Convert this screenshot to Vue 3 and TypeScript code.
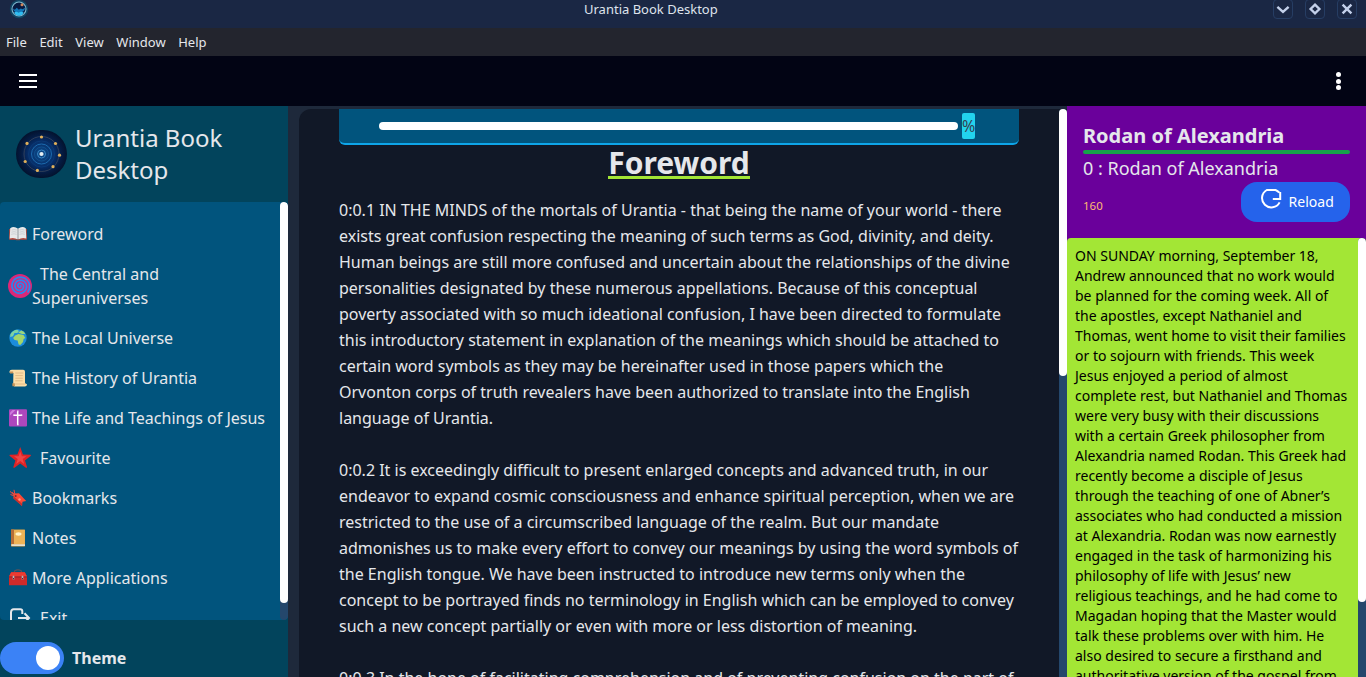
<script setup lang="ts">
interface NavItem {
  icon: string
  label: string
  large?: boolean
}

const menus: string[] = ['File', 'Edit', 'View', 'Window', 'Help']

const navItems: NavItem[] = [
  { icon: 'book', label: 'Foreword' },
  { icon: 'spiral', label: 'The Central and\nSuperuniverses', large: true },
  { icon: 'globe', label: 'The Local Universe' },
  { icon: 'scroll', label: 'The History of Urantia' },
  { icon: 'cross', label: 'The Life and Teachings of Jesus' },
  { icon: 'star', label: 'Favourite', large: true },
  { icon: 'bookmark', label: 'Bookmarks' },
  { icon: 'notebook', label: 'Notes' },
  { icon: 'toolbox', label: 'More Applications' },
  { icon: 'exit', label: 'Exit', large: true },
]

// Archimedean arm, wound from the centre of a 24 unit box.
function spiralArm(start: number, turns: number, radius: number): string {
  const steps = 60
  const points: string[] = []
  for (let i = 0; i <= steps; i++) {
    const t = i / steps
    const angle = start + t * turns * Math.PI * 2
    const r = 0.6 + t * radius
    points.push(`${(12 + r * Math.cos(angle)).toFixed(2)} ${(12 + r * Math.sin(angle)).toFixed(2)}`)
  }
  return 'M' + points.join('L')
}

const spiral = spiralArm(0, 3.1, 9.3)

const paragraphs: string[] = [
  `0:0.1 IN THE MINDS of the mortals of Urantia - that being the name of your world - there
exists great confusion respecting the meaning of such terms as God, divinity, and deity.
Human beings are still more confused and uncertain about the relationships of the divine
personalities designated by these numerous appellations. Because of this conceptual
poverty associated with so much ideational confusion, I have been directed to formulate
this introductory statement in explanation of the meanings which should be attached to
certain word symbols as they may be hereinafter used in those papers which the
Orvonton corps of truth revealers have been authorized to translate into the English
language of Urantia.`,
  `0:0.2 It is exceedingly difficult to present enlarged concepts and advanced truth, in our
endeavor to expand cosmic consciousness and enhance spiritual perception, when we are
restricted to the use of a circumscribed language of the realm. But our mandate
admonishes us to make every effort to convey our meanings by using the word symbols of
the English tongue. We have been instructed to introduce new terms only when the
concept to be portrayed finds no terminology in English which can be employed to convey
such a new concept partially or even with more or less distortion of meaning.`,
  `0:0.3 In the hope of facilitating comprehension and of preventing confusion on the part of`,
]

const rodanText = `ON SUNDAY morning, September 18,
Andrew announced that no work would
be planned for the coming week. All of
the apostles, except Nathaniel and
Thomas, went home to visit their families
or to sojourn with friends. This week
Jesus enjoyed a period of almost
complete rest, but Nathaniel and Thomas
were very busy with their discussions
with a certain Greek philosopher from
Alexandria named Rodan. This Greek had
recently become a disciple of Jesus
through the teaching of one of Abner’s
associates who had conducted a mission
at Alexandria. Rodan was now earnestly
engaged in the task of harmonizing his
philosophy of life with Jesus’ new
religious teachings, and he had come to
Magadan hoping that the Master would
talk these problems over with him. He
also desired to secure a firsthand and
authoritative version of the gospel from`
</script>

<template>
  <div class="window">
    <header class="titlebar">
      <svg class="app-icon" viewBox="0 0 22 22">
        <circle cx="11" cy="11" r="9.2" fill="#0c5a78" opacity=".6" />
        <circle cx="11" cy="11" r="7" fill="#081a40" stroke="#7fb6cc" stroke-width="1.1" />
        <path d="M4.8 10.5l2 1.2 2-2 2 2 2-1.2 2 .7 2.4-1.7a6.4 6.4 0 0 1-12.4 1z" fill="#1478b8" />
        <path d="M6.2 14.6q2.2-1.6 4.4.2 2.6-1.8 5-.2-1.4 3.2-4.6 3.2t-4.8-3.2z" fill="#2fbdf0" />
        <circle cx="14" cy="6.8" r="1.5" fill="#d08558" />
      </svg>
      <span class="title">Urantia Book Desktop</span>
      <div class="controls">
        <span class="control"><svg viewBox="0 0 18 18"><path d="M3.4 6.8L9 11.8l5.6-5" /></svg></span>
        <span class="control"><svg viewBox="0 0 18 18"><path d="M9 4.6L13.4 9 9 13.4 4.6 9z" /></svg></span>
        <span class="control"><svg viewBox="0 0 18 18"><path d="M4.6 4.6l8.8 8.8M13.4 4.6l-8.8 8.8" /></svg></span>
      </div>
    </header>
    <nav class="menubar">
      <span v-for="m in menus" :key="m">{{ m }}</span>
    </nav>
    <div class="toolbar">
      <div class="burger"><i></i><i></i><i></i></div>
      <div class="kebab"><i></i><i></i><i></i></div>
    </div>

    <main class="body">
      <aside class="sidebar">
        <div class="brand">
          <svg class="logo" viewBox="0 0 51 48">
            <defs>
              <radialGradient id="cosmos">
                <stop offset="0" stop-color="#0c4c8c" />
                <stop offset=".55" stop-color="#062c66" />
                <stop offset=".8" stop-color="#041b42" />
                <stop offset="1" stop-color="#03132f" />
              </radialGradient>
            </defs>
            <rect width="51" height="48" rx="24" fill="url(#cosmos)" />
            <g fill="none">
              <circle cx="25.5" cy="24" r="17.5" stroke="#4b5360" stroke-width=".6" />
              <circle cx="25.5" cy="24" r="13" stroke="#0d3d7a" stroke-width=".7" />
              <circle cx="25.5" cy="24" r="10" stroke="#1c69ad" stroke-width="1" />
              <circle cx="25.5" cy="24" r="7" stroke="#145796" stroke-width=".7" />
              <circle cx="25.5" cy="24" r="4" stroke="#3886c4" stroke-width="1" />
            </g>
            <circle cx="25.5" cy="24" r="2.1" fill="#e6eff2" />
            <g fill="#e0b05a">
              <circle cx="25.5" cy="7" r="1.6" /><circle cx="39.5" cy="13.5" r="1.6" />
              <circle cx="43.5" cy="25.2" r="1.6" /><circle cx="37" cy="36.7" r="1.6" />
              <circle cx="21.4" cy="40.4" r="1.6" /><circle cx="9.2" cy="31.5" r="1.6" />
              <circle cx="11" cy="13.4" r="1.6" />
            </g>
          </svg>
          <h1>Urantia Book<br />Desktop</h1>
        </div>

        <div class="nav-wrap">
          <ul class="nav">
            <li v-for="item in navItems" :key="item.label" :class="{ large: item.large }">
              <svg v-if="item.icon === 'book'" class="emoji" viewBox="0 0 18 18">
                <path d="M.2 4h17.6v10.8H.2z" fill="#b8493c" />
                <path d="M1.2 3.2Q5 .6 9 3.7 13 .6 16.8 3.2l.5 10.2Q13 12 9 14.5 5 12 .7 13.4z" fill="#e7e9ea" />
                <path d="M9 3.7v10.8" stroke="#8f989d" stroke-width="1" />
                <path d="M2.7 5.1q2.5-1 5 0M2.4 7.2q2.6-1 5.2 0M2.2 9.3q2.8-1 5.4 0M10.4 5.1q2.5-1 5 0M10.4 7.2q2.6-1 5.2 0M10.4 9.3q2.8-1 5.4 0" fill="none" stroke="#c6cccf" stroke-width=".8" />
                <path d="M7 14.3h4v1H7z" fill="#8b5650" />
              </svg>
              <svg v-else-if="item.icon === 'spiral'" class="emoji" viewBox="0 0 24 24">
                <circle cx="12" cy="12" r="12" fill="#db2777" />
                <path :d="spiral" fill="none" stroke="#2b86ee" stroke-width="1.75" stroke-linecap="round" />
              </svg>
              <svg v-else-if="item.icon === 'globe'" class="emoji" viewBox="0 0 18 18">
                <circle cx="9" cy="9" r="8.7" fill="#1c8cdb" />
                <path d="M1.5 5Q4 .9 8.2.7L10 2 8.3 4 5.5 4 4 7.2 1.1 8z" fill="#7ed3a0" />
                <path d="M6.2 6.4L9.5 5l5 1 1.8 3.1-1.7 1-.6 2.8-2.7 3-1.7-.5-1-4-3-.5-1.5-2z" fill="#a3d66a" />
                <path d="M9.2 3.4l3.2-2q2.7.9 4 3.6L13 5z" fill="#9bd67c" />
              </svg>
              <svg v-else-if="item.icon === 'scroll'" class="emoji" viewBox="0 0 18 18">
                <path d="M2.8.8h11.4q1.8 0 1.8 2v11.4l2 1q0 2.3-2.2 2.3H5.4q-1.5-1-1.2-3L4.4 4H.8Q-.4.8 2.8.8z" fill="#fddda6" />
                <path d="M1 2.6h3.2v1.9H1zM3.3 14.2h2.5l.2 3H3.4z" fill="#c69358" />
                <path d="M6.3 4h8M6.3 6.6h7.5M6.3 9.2h7.5M6.2 11.8h7.5M6 15h10.5" stroke="#dfb783" stroke-width=".9" />
              </svg>
              <svg v-else-if="item.icon === 'cross'" class="emoji" viewBox="0 0 18 18">
                <rect width="18" height="17.4" y=".2" rx="1" fill="#ac47bd" />
                <path d="M1 3.5L3.5 1h3L1 6.5z" fill="#cf7bdd" />
                <path d="M8.7 2.2v13.5M4.8 6.2h8" stroke="#fff" stroke-width="1.5" />
                <path d="M8 2h1.6M8 15.8h1.6M4.8 5.4v1.6M12.8 5.4v1.6" stroke="#fff" stroke-width=".8" />
              </svg>
              <svg v-else-if="item.icon === 'star'" class="emoji" viewBox="0 0 24 24">
                <path d="M12.2 1L15 8.6l7.6.1q.8.6 0 1.3L17 14.4l2.1 6.8q-.2.9-1.2.5l-5.7-4.2-5.7 4.2q-1 .4-1.2-.5l2.1-6.8L1.8 10q-.8-.7 0-1.3l7.6-.1z" fill="#df2426" />
                <path d="M12.2 5.4l1.7 4.8h4.5l-3.7 2.9 1.5 5-4-3-4 3 1.5-5L6 10.2h4.6z" fill="#f04545" />
              </svg>
              <svg v-else-if="item.icon === 'bookmark'" class="emoji" viewBox="0 0 18 18">
                <path d="M5 4.5l5-.2L17.2 12l-3.7.8-.5 4.1L4.3 9.3z" fill="#fb4935" />
                <path d="M4.3 9.3L13 16.9l.1-2.1L5.3 8z" fill="#c92e2b" />
                <path d="M6.2 6.5L3.2 3M5.8 6.8L1 2.4M5.5 7L1.5 5.5M6 6L5 .8" stroke="#f04b3d" stroke-width="1" />
                <circle cx="6.7" cy="7" r="1" fill="#7e302b" />
                <circle cx="10.5" cy="10.5" r="1.2" fill="#ff9a84" />
              </svg>
              <svg v-else-if="item.icon === 'notebook'" class="emoji" viewBox="0 0 18 18">
                <rect x="2" y=".4" width="14" height="17" rx=".6" fill="#dfa347" />
                <path d="M2 .5h3v14.4H2z" fill="#b66e38" />
                <path d="M2.5 15.3H16v1.6H2.5z" fill="#e6dfcf" />
                <path d="M5 1h10.8v14H5z" fill="#edb357" />
                <ellipse cx="9.5" cy="5" rx="3" ry="1.7" fill="#fff3ca" />
              </svg>
              <svg v-else-if="item.icon === 'toolbox'" class="emoji" viewBox="0 0 18 18">
                <path d="M5.5 3.6V2Q9-.1 12.5 2v1.6" fill="none" stroke="#5e5158" stroke-width="1.2" />
                <path d="M2.2 3.2h13.6L18 7.4v8.8H0V7.4z" fill="#cf2a2a" />
                <path d="M2.2 3.2h13.6L18 7.4H0z" fill="#ec3b31" />
                <path d="M0 8h18" stroke="#93252a" stroke-width="1" />
                <path d="M4.5 6.8v3.8M13.5 6.8v3.8" stroke="#aeb9c0" stroke-width="1.6" />
                <path d="M4.5 9v1.3M13.5 9v1.3" stroke="#4b2e36" stroke-width="1" />
              </svg>
              <svg v-else class="emoji" viewBox="0 0 24 24">
                <path d="M3 10V6.5Q3 3.2 5.7 3.2h6.6q2 0 2 2V8M3 10v8q0 2.7 2.7 2.7h8.6V17M10 12h11M16.5 7.2L21 12l-4.5 4.6" fill="none" stroke="#e5e7eb" stroke-width="2" />
              </svg>
              <span class="label">{{ item.label }}</span>
            </li>
          </ul>
          <div class="track nav-track"><div class="thumb"></div></div>
        </div>

        <div class="theme">
          <div class="toggle"><i></i></div>
          <b>Theme</b>
        </div>
      </aside>

      <section class="reader-wrap">
        <div class="reader">
          <article class="page">
            <div class="progress">
              <div class="bar"></div>
              <span class="percent">%</span>
            </div>
            <h2><span>Foreword</span></h2>
            <p v-for="(p, i) in paragraphs" :key="i">{{ p }}</p>
          </article>
          <div class="track reader-track"><div class="thumb"></div></div>
        </div>
      </section>

      <aside class="notes">
        <div class="notes-head">
          <h3>Rodan of Alexandria</h3>
          <div class="rule"></div>
          <div class="subtitle">0 : Rodan of Alexandria</div>
          <div class="actions">
            <span class="count">160</span>
            <button>
              <svg viewBox="0 0 24 24"><path d="M21.2 5v7h-7.4M20.2 5.5A9.2 9.2 0 0 0 16.5 3H7.8A9.3 9.3 0 1 0 20.6 15.4" /></svg>
              <span>Reload</span>
            </button>
          </div>
        </div>
        <div class="notes-body">
          <p>{{ rodanText }}</p>
          <div class="track notes-track"><div class="thumb"></div></div>
        </div>
      </aside>
    </main>
  </div>
</template>

<style>
html,
body {
  margin: 0;
  overflow: hidden;
  background: #020414;
}
</style>

<style scoped>
.window {
  width: 1366px;
  height: 677px;
  display: flex;
  flex-direction: column;
  overflow: hidden;
  font-family: 'Noto Sans', sans-serif;
  font-size: 16px;
  line-height: 24px;
  color: #e5e7eb;
}
.window * {
  box-sizing: border-box;
}
h1, h2, h3, p, ul {
  margin: 0;
  padding: 0;
}
.titlebar {
  height: 28px;
  flex: none;
  display: grid;
  grid-template-columns: 584px 1fr auto;
  background: #1a2744;
  font-size: 13px;
  line-height: 19px;
}
.app-icon {
  width: 22px;
  height: 22px;
  margin: -2px 0 0 8px;
}
.title {
  color: #dfe3ec;
}
.controls {
  display: flex;
  justify-content: flex-end;
  gap: 12px;
  padding-right: 9px;
}
.control {
  width: 20px;
  height: 20px;
  margin-top: -1px;
  border: 1px solid #263d63;
  border-radius: 4px;
}
.control svg {
  display: block;
  width: 18px;
  height: 18px;
  fill: none;
  stroke: #c3d0ea;
  stroke-width: 2.4;
}
.menubar {
  height: 28px;
  flex: none;
  display: flex;
  gap: 12.6px;
  padding-left: 6px;
  background: #23252e;
  font-size: 13px;
  line-height: 28px;
}
.toolbar {
  height: 50px;
  flex: none;
  display: flex;
  justify-content: space-between;
  align-items: center;
  padding: 0 25.5px 0 19px;
  background: #020414;
}
.burger {
  width: 18px;
  display: grid;
  gap: 4px;
}
.burger i {
  height: 2px;
  background: #fff;
}
.kebab {
  display: grid;
  gap: 1.6px;
}
.kebab i {
  width: 5px;
  height: 5px;
  border-radius: 50%;
  background: #fff;
}
.body {
  flex: 1;
  min-height: 0;
  display: flex;
}
.sidebar {
  width: 288px;
  flex: none;
  display: flex;
  flex-direction: column;
  background: #02445c;
}
.brand {
  height: 96px;
  flex: none;
  display: flex;
  align-items: center;
  padding-left: 16px;
  gap: 8px;
}
.logo {
  width: 51px;
  height: 48px;
}
h1 {
  font-size: 24px;
  line-height: 32px;
  font-weight: 400;
}
.nav-wrap {
  height: 418px;
  flex: none;
  display: flex;
  overflow: hidden;
  border-radius: 4px;
  background: #01547d;
}
.nav {
  flex: 1;
  padding-top: 12px;
  list-style: none;
}
.nav li {
  display: flex;
  align-items: center;
  padding: 8px;
}
.emoji {
  width: 18px;
  height: 18px;
  flex: none;
  margin: 0 5px 0 1px;
}
.large .emoji {
  width: 24px;
  height: 24px;
  margin: 0;
}
.label {
  white-space: pre;
}
.large .label {
  text-indent: 8px;
}
.track {
  width: 8px;
  flex: none;
  background: #24476c;
  border-radius: 4px;
}
.thumb {
  background: #fff;
  border-radius: 4px;
}
.nav-track .thumb {
  height: 401px;
}
.theme {
  flex: 1;
  display: flex;
  align-items: center;
  gap: 8px;
  padding-top: 19px;
}
.toggle {
  width: 64px;
  height: 32px;
  display: flex;
  justify-content: flex-end;
  padding: 4px;
  border-radius: 16px;
  background: #3b82f6;
}
.toggle i {
  width: 24px;
  height: 24px;
  border-radius: 50%;
  background: #fff;
}
.reader-wrap {
  width: 779px;
  flex: none;
  padding: 3px 0 0 11px;
  background: #1e293b;
}
.reader {
  height: 568px;
  display: flex;
  overflow: hidden;
  border-radius: 12px 0 0 0;
  background: #111827;
}
.page {
  flex: 1;
  padding: 0 40px;
}
.progress {
  height: 36px;
  display: flex;
  align-items: center;
  gap: 4px;
  padding: 0 40px;
  background: #01547d;
  border-bottom: 2px solid #0ea5e9;
  border-radius: 0 0 6px 6px;
}
.bar {
  width: 579px;
  height: 8px;
  border-radius: 4px;
  background: #fff;
}
.percent {
  height: 26px;
  line-height: 26px;
  border-radius: 2px;
  background: #22d3ee;
  color: #374151;
}
h2 {
  height: 36px;
  font-size: 30px;
  line-height: 36px;
  text-align: center;
}
h2 span {
  display: inline-block;
  height: 34px;
  border-bottom: 3px solid #a3e635;
}
.page p {
  line-height: 26px;
  white-space: pre;
  margin-bottom: 26px;
}
.page h2 + p {
  margin-top: 16px;
}
.reader-track {
  border-radius: 4px 4px 0 0;
}
.reader-track .thumb {
  height: 267px;
}
.notes {
  width: 299px;
  flex: none;
  display: flex;
  flex-direction: column;
  background: #6a009b;
}
.notes-head {
  height: 132px;
  flex: none;
  padding: 16px 16px 0;
}
h3 {
  font-size: 20px;
  line-height: 28px;
  font-weight: 700;
}
.rule {
  height: 4px;
  border-radius: 2px;
  background: #16a34a;
}
.subtitle {
  font-size: 18px;
  line-height: 28px;
}
.actions {
  display: flex;
  justify-content: space-between;
}
.count {
  margin-top: 12px;
  font-size: 11.5px;
  color: #fdba74;
}
button {
  width: 109px;
  height: 40px;
  display: flex;
  align-items: center;
  gap: 5.6px;
  padding: 0 0 0 18px;
  border: 0;
  border-radius: 16px;
  background: #2563eb;
  color: #fff;
  font: 14px/20px 'Noto Sans', sans-serif;
}
button svg {
  width: 24px;
  height: 24px;
  margin-top: -7px;
  fill: none;
  stroke: #fff;
  stroke-width: 2;
}
.notes-body {
  flex: 1;
  min-height: 0;
  display: flex;
  overflow: hidden;
  border-radius: 4px 4px 0 0;
  background: #a3e635;
}
.notes-body p {
  flex: 1;
  padding: 8px;
  color: #000;
  font-size: 14px;
  line-height: 20px;
  white-space: pre;
}
.notes-track {
  border-radius: 4px 4px 0 0;
}
.notes-track .thumb {
  height: 364px;
}
</style>
